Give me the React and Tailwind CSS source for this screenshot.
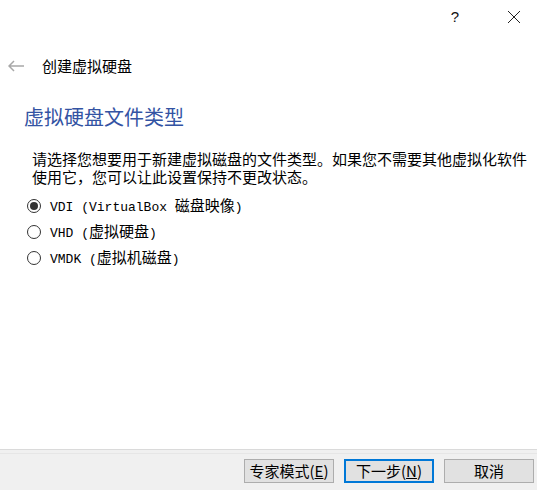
import React from "react";

const cjk = { fontFamily: '"Noto Sans CJK SC", "Noto Sans", sans-serif' };
const mono = { fontFamily: '"Liberation Mono", "Noto Sans CJK SC", monospace' };

function Radio({ checked, children }) {
  return (
    <div className="flex items-center h-[26px]">
      <div className="w-[14px] h-[14px] rounded-full border border-[#333333] bg-white flex items-center justify-center ml-[27px]">
        {checked && <div className="w-[8px] h-[8px] rounded-full bg-[#333333]" />}
      </div>
      <div className="ml-[9px] text-black whitespace-pre leading-[26px]">{children}</div>
    </div>
  );
}

function M({ children }) {
  return (
    <span className="text-[13px]" style={mono}>
      {children}
    </span>
  );
}
function C({ children }) {
  return (
    <span className="text-[15px]" style={cjk}>
      {children}
    </span>
  );
}

function Btn({ children, primary }) {
  return (
    <div
      className={
        "w-[90px] h-[24px] flex items-center justify-center text-[15px] text-black bg-[#e1e1e1] " +
        (primary ? "border-2 border-[#0078d7]" : "border border-[#adadad]")
      }
      style={cjk}
    >
      {children}
    </div>
  );
}

export default function App() {
  return (
    <div className="w-[537px] h-[490px] bg-white flex flex-col overflow-hidden" style={cjk}>
      <div className="h-[34px] flex justify-end">
        <div className="w-[46px] mr-[13px] flex items-center justify-center text-[15px] text-[#111]" style={{ fontFamily: '"Liberation Sans", sans-serif' }}>?</div>
        <div className="w-[46px] flex items-center justify-center">
          <svg width="14" height="14" viewBox="0 0 14 14">
            <path d="M1 1 L13 13 M13 1 L1 13" stroke="#222" strokeWidth="1" fill="none" />
          </svg>
        </div>
      </div>
      <div className="h-[32px] mt-[16px] flex items-center">
        <svg width="16" height="12" viewBox="0 0 16 12" className="ml-[8px]">
          <path d="M1 6 H16 M6 1 L1 6 L6 11" stroke="#a8a8a8" strokeWidth="1.5" fill="none" />
        </svg>
        <div className="ml-[18px] text-[15px] text-black">创建虚拟硬盘</div>
      </div>
      <div className="mt-[21px] ml-[24px] text-[20px] leading-[28px] text-[#3353a3]">虚拟硬盘文件类型</div>
      <div className="mt-[19px] ml-[32px] w-[500px] text-[15px] leading-[18px] text-black">
        请选择您想要用于新建虚拟磁盘的文件类型。如果您不需要其他虚拟化软件使用它，您可以让此设置保持不更改状态。
      </div>
      <div className="mt-[7px] flex flex-col">
        <Radio checked>
          <M>VDI (VirtualBox </M>
          <C>磁盘映像</C>
          <M>)</M>
        </Radio>
        <Radio>
          <M>VHD (</M>
          <C>虚拟硬盘</C>
          <M>)</M>
        </Radio>
        <Radio>
          <M>VMDK (</M>
          <C>虚拟机磁盘</C>
          <M>)</M>
        </Radio>
      </div>
      <div className="flex-1" />
      <div className="h-[41px] bg-[#f0f0f0] border-t border-[#dadada] flex flex-col">
        <div className="h-[3px]" />
        <div className="h-px bg-[#e6e6e6]" />
        <div className="flex justify-end gap-[10px] pr-[3px] mt-[5px]">
          <Btn>
            专家模式(<span className="underline">E</span>)
          </Btn>
          <Btn primary>
            下一步(<span className="underline">N</span>)
          </Btn>
          <Btn>取消</Btn>
        </div>
      </div>
    </div>
  );
}
